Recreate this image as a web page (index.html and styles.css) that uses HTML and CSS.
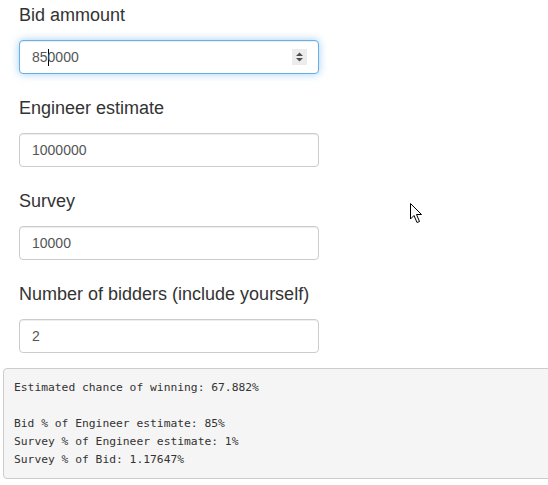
FILE: index.html
```html
<!DOCTYPE html>
<html>
<head>
<meta charset="utf-8">
<link rel="stylesheet" href="styles.css">
</head>
<body>
<div class="form">
  <div class="group">
    <label class="label">Bid ammount</label>
    <div class="control focused">
      <span class="val">85<span class="caret"></span>0000</span>
      <span class="spin">
        <svg width="15" height="16" viewBox="0 0 15 16"><path d="M7.5 3.5 L11 7 L4 7 Z" fill="#505050"/><path d="M4 9 L11 9 L7.5 12.5 Z" fill="#505050"/></svg>
      </span>
    </div>
  </div>
  <div class="group">
    <label class="label">Engineer estimate</label>
    <div class="control"><span class="val">1000000</span></div>
  </div>
  <div class="group">
    <label class="label">Survey</label>
    <div class="control"><span class="val">10000</span></div>
  </div>
  <div class="group last">
    <label class="label">Number of bidders (include yourself)</label>
    <div class="control"><span class="val">2</span></div>
  </div>
</div>
<pre class="output">Estimated chance of winning: 67.882%

Bid % of Engineer estimate: 85%
Survey % of Engineer estimate: 1%
Survey % of Bid: 1.17647%</pre>
<svg class="cursor" width="14" height="22" viewBox="0 0 14 22"><path d="M1.5 1.5 L1.5 17 L5 13.5 L8 20.5 L10.5 19.5 L7.5 12.5 L12.5 12.5 Z" fill="#fff" stroke="#000" stroke-width="1" stroke-linejoin="miter"/></svg>
</body>
</html>
```
FILE: styles.css
```css
html, body {
  margin: 0;
  padding: 0;
  background: #fff;
  overflow: hidden;
}
body {
  position: relative;
  width: 548px;
  height: 485px;
  font-family: "Liberation Sans", Arial, sans-serif;
  color: #333;
}
.form {
  padding: 5px 0 0 19px;
}
.group {
  display: flex;
  flex-direction: column;
  margin-bottom: 24px;
}
.group.last {
  margin-bottom: 15px;
}
.label {
  display: block;
  font-size: 18px;
  line-height: 20px;
  height: 20px;
  margin-bottom: 15px;
  color: #333;
}
.control {
  position: relative;
  box-sizing: border-box;
  width: 300px;
  height: 34px;
  border: 1px solid #ccc;
  border-radius: 4px;
  padding: 0 12px;
  display: flex;
  align-items: center;
  font-size: 14px;
  color: #555;
  background: #fff;
  box-shadow: inset 0 1px 1px rgba(0,0,0,.075);
}
.control.focused {
  border-color: #66afe9;
  box-shadow: inset 0 1px 1px rgba(0,0,0,.075), 0 0 8px rgba(102,175,233,.6);
}
.val {
  display: inline-flex;
  align-items: center;
  line-height: 20px;
}
.caret {
  display: inline-block;
  width: 1px;
  height: 17px;
  background: #000;
  margin: 0 -1px 0 0;
}
.spin {
  position: absolute;
  right: 11px;
  top: 8px;
  width: 15px;
  height: 16px;
  background: #ececec;
  display: block;
}
.spin svg {
  display: block;
}
.output {
  margin: 0 -10px 0 3px;
  padding: 9.5px 9.5px 9.5px 10px;
  background: #f5f5f5;
  border: 1px solid #ccc;
  border-radius: 4px;
  font-family: "DejaVu Sans Mono", "Liberation Mono", monospace;
  font-size: 11.3px;
  line-height: 18px;
  color: #333;
  white-space: pre;
}
.cursor {
  position: absolute;
  left: 409px;
  top: 202px;
}
```
